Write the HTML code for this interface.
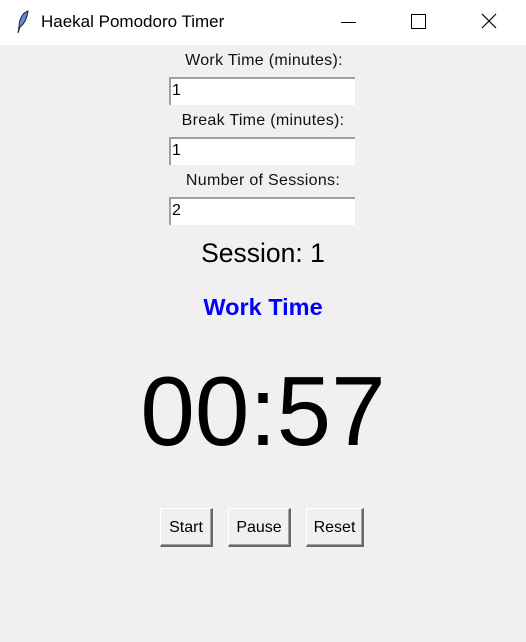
<!DOCTYPE html>
<html><head><style>
body{margin:0;width:526px;height:642px;background:#f0f0f0;font-family:"Liberation Sans",sans-serif;position:relative;overflow:hidden}
.tb{position:absolute;left:0;top:0;width:526px;height:45px;background:#fff}
.t{position:absolute;color:#000}
.lbl{position:absolute;width:526px;text-align:center;font-size:16px;color:#111;letter-spacing:0.3px}
.en{position:absolute;left:169px;background:#fff;border-top:2px solid #a0a0a0;border-left:2px solid #a0a0a0;box-sizing:border-box;width:186px;height:28px;font-size:16px;padding:3px 0 0 1px}
.btn{position:absolute;top:508px;height:39px;background:#f0f0f0;border:1px solid #fff;border-right:2px solid #696969;border-bottom:2px solid #696969;box-sizing:border-box;font-size:16px;text-align:center;line-height:37px;box-shadow:inset -1px -1px 0 #a0a0a0}
</style></head><body>
<div class="tb">
<svg style="position:absolute;left:15px;top:10px" width="16" height="24" viewBox="0 0 16 24"><path d="M13 1 C7 3 4 10 4 17 L3 23 L5 17 C9 14 12 8 13 1Z" fill="#5a8ed8" stroke="#222" stroke-width="1"/></svg>
<div class="t" style="left:41px;top:12px;font-size:17px">Haekal Pomodoro Timer</div>
<div style="position:absolute;left:341px;top:22px;width:15px;height:1px;background:#000"></div>
<div style="position:absolute;left:411px;top:14px;width:13px;height:13px;border:1px solid #000"></div>
<svg style="position:absolute;left:481px;top:13px" width="16" height="16"><path d="M1 1L15 15M15 1L1 15" stroke="#000" stroke-width="1.2"/></svg>
</div>
<div class="lbl" style="top:52px;left:1px">Work Time (minutes):</div>
<div class="en" style="top:77px">1</div>
<div class="lbl" style="top:112px">Break Time (minutes):</div>
<div class="en" style="top:137px">1</div>
<div class="lbl" style="top:172px">Number of Sessions:</div>
<div class="en" style="top:197px">2</div>
<div class="lbl" style="top:238px;font-size:26.5px;color:#000;letter-spacing:0">Session: 1</div>
<div class="lbl" style="top:294px;font-size:23.5px;font-weight:bold;color:#0000ff;letter-spacing:0">Work Time</div>
<div class="lbl" style="top:358px;font-size:98px;color:#000;line-height:1.1;letter-spacing:0">00:57</div>
<div class="btn" style="left:160px;width:53px">Start</div>
<div class="btn" style="left:228px;width:63px">Pause</div>
<div class="btn" style="left:306px;width:58px">Reset</div>
</body></html>
